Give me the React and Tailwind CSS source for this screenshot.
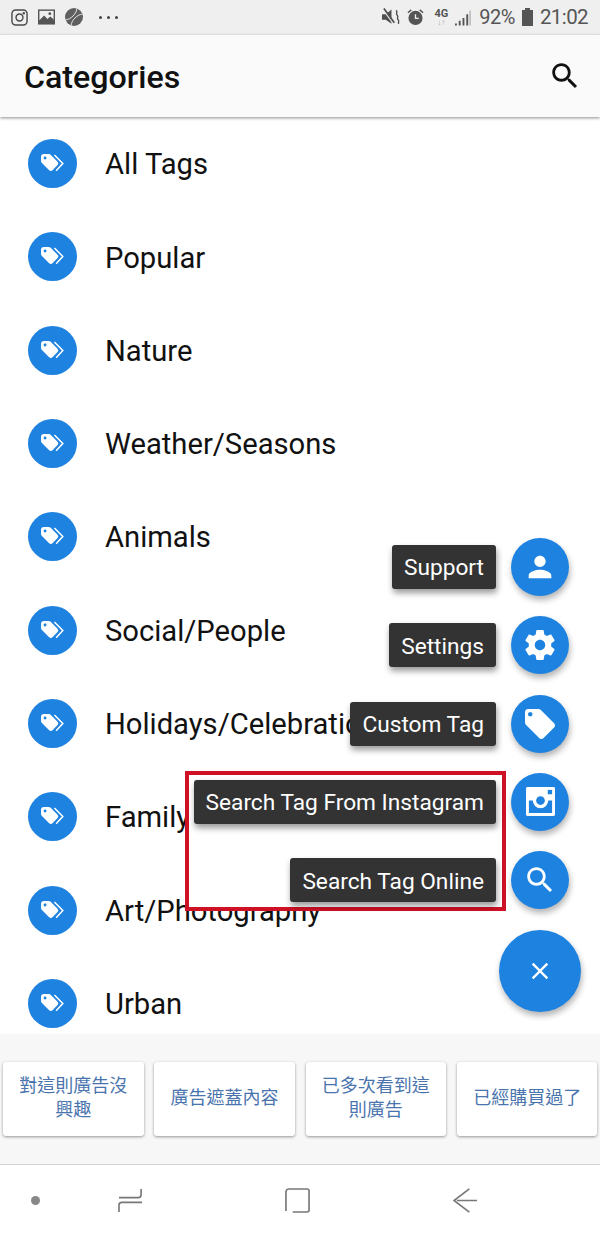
import React from 'react';

const categories = [
  'All Tags',
  'Popular',
  'Nature',
  'Weather/Seasons',
  'Animals',
  'Social/People',
  'Holidays/Celebrations',
  'Family',
  'Art/Photography',
  'Urban',
];

const adButtons = [
  '對這則廣告沒興趣',
  '廣告遮蓋內容',
  '已多次看到這則廣告',
  '已經購買過了',
];

const personPath = 'M12 12c2.21 0 4-1.79 4-4s-1.79-4-4-4-4 1.79-4 4 1.79 4 4 4zm0 2c-2.67 0-8 1.34-8 4v2h16v-2c0-2.66-5.33-4-8-4z';
const gearPath = 'M19.43 12.98c.04-.32.07-.64.07-.98s-.03-.66-.07-.98l2.11-1.65c.19-.15.24-.42.12-.64l-2-3.46c-.12-.22-.39-.3-.61-.22l-2.49 1c-.52-.4-1.08-.73-1.69-.98l-.38-2.65C14.46 2.18 14.25 2 14 2h-4c-.25 0-.46.18-.49.42l-.38 2.65c-.61.25-1.17.59-1.69.98l-2.49-1c-.23-.09-.49 0-.61.22l-2 3.46c-.13.22-.07.49.12.64l2.11 1.65c-.04.32-.07.65-.07.98s.03.66.07.98l-2.11 1.65c-.19.15-.24.42-.12.64l2 3.46c.12.22.39.3.61.22l2.49-1c.52.4 1.08.73 1.69.98l.38 2.65c.03.24.24.42.49.42h4c.25 0 .46-.18.49-.42l.38-2.65c.61-.25 1.17-.59 1.69-.98l2.49 1c.23.09.49 0 .61-.22l2-3.46c.12-.22.07-.49-.12-.64l-2.11-1.65zM12 15.5c-1.93 0-3.5-1.57-3.5-3.5s1.57-3.5 3.5-3.5 3.5 1.57 3.5 3.5-1.57 3.5-3.5 3.5z';
const tagPath = 'M21.41 11.58l-9-9C12.05 2.22 11.55 2 11 2H4c-1.1 0-2 .9-2 2v7c0 .55.22 1.05.59 1.42l9 9c.36.36.86.58 1.41.58.55 0 1.05-.22 1.41-.59l7-7c.37-.36.59-.86.59-1.41 0-.55-.23-1.06-.59-1.42zM5.5 7C4.67 7 4 6.33 4 5.5S4.67 4 5.5 4 7 4.67 7 5.5 6.33 7 5.5 7z';
const searchPath = 'M15.5 14h-.79l-.28-.27C15.41 12.59 16 11.11 16 9.5 16 5.91 13.09 3 9.5 3S3 5.91 3 9.5 5.91 16 9.5 16c1.61 0 3.09-.59 4.23-1.57l.27.28v.79l5 4.99L20.49 19l-4.99-5zm-6 0C7.01 14 5 11.99 5 9.5S7.01 5 9.5 5 14 7.01 14 9.5 11.99 14 9.5 14z';
const closePath = 'M19 6.41L17.59 5 12 10.59 6.41 5 5 6.41 10.59 12 5 17.59 6.41 19 12 13.41 17.59 19 19 17.59 13.41 12 19 6.41z';

function MaterialIcon({ d, className }) {
  return (
    <svg viewBox="0 0 24 24" className={className} fill="currentColor" aria-hidden>
      <path d={d} />
    </svg>
  );
}

function InstagramGlyph() {
  return (
    <svg viewBox="0 0 30 30" className="w-[29px] h-[29px]" aria-hidden>
      <rect x="0" y="0" width="30" height="30" rx="1.500" fill="#fff" />
      <rect x="22.500" y="3" width="4.500" height="4.500" fill="#1e82e0" />
      <path d="M3 14h4a8 8 0 0 0 16 0h4v13H3z" fill="#1e82e0" />
      <circle cx="15" cy="14" r="4.500" fill="#1e82e0" />
    </svg>
  );
}

function TagsGlyph() {
  return (
    <svg viewBox="0 0 26 22" className="w-[25px] h-[21px]" aria-hidden>
      <path d="M1 4a3 3 0 0 1 3-3h5a2.500 2.500 0 0 1 1.800.7l7.500 7.500a2.500 2.500 0 0 1 0 3.500l-5.300 5.300a2.500 2.500 0 0 1-3.500 0l-7.800-7.800a2.500 2.500 0 0 1-.7-1.700z" fill="#fff" />
      <circle cx="5.200" cy="5.200" r="1.500" fill="#1e82e0" />
      <path d="M15 2l8.800 9-7 7.500" fill="none" stroke="#fff" strokeWidth="1.600" />
    </svg>
  );
}

function StatusLeftIcons() {
  return (
    <div className="flex items-center gap-[10px]">
      <svg viewBox="0 0 18 18" className="w-[17px] h-[17px]" fill="none" stroke="#4a4a4a" strokeWidth="1.500" aria-hidden>
        <rect x="1" y="1" width="16" height="16" rx="4" />
        <circle cx="9" cy="9" r="3.700" />
        <circle cx="13.500" cy="4.500" r="0.600" fill="#4a4a4a" />
      </svg>
      <svg viewBox="0 0 18 16" className="w-[17px] h-[16px]" aria-hidden>
        <rect x="0" y="0" width="18" height="16" fill="#555" />
        <rect x="1.500" y="1.500" width="15" height="10" fill="#efefef" />
        <path d="M1.500 11.500l5-5 3.500 3.500 3-2.500 3.500 3v2h-15z" fill="#555" />
        <circle cx="12.500" cy="4.500" r="1.500" fill="#555" />
      </svg>
      <svg viewBox="0 0 18 18" className="w-[18px] h-[18px]" aria-hidden>
        <circle cx="9" cy="9" r="9" fill="#5f5f5f" />
        <path d="M5 1c3.500 4 3.500 12 0 16M13 1c-3.500 4-3.500 12 0 16" stroke="#efefef" strokeWidth="0.900" fill="none" transform="rotate(45 9 9)" />
      </svg>
      <div className="flex items-center gap-[5px] ml-[6px]">
        <span className="w-[3px] h-[3px] rounded-full bg-[#444]" />
        <span className="w-[3px] h-[3px] rounded-full bg-[#444]" />
        <span className="w-[3px] h-[3px] rounded-full bg-[#444]" />
      </div>
    </div>
  );
}

function StatusRightIcons() {
  return (
    <div className="flex items-center text-[#555]">
      <svg viewBox="0 0 19 18" className="w-[18px] h-[18px] mr-[7px]" aria-hidden>
        <path d="M0 6h4l6-5v15l-6-4H0z" fill="#4f4f4f" />
        <path d="M1 1l11 15" stroke="#efefef" strokeWidth="1.500" />
        <path d="M2 0l11 15" stroke="#4f4f4f" strokeWidth="1.800" />
        <path d="M15 2c2 2-1 3 1 5s-1 3 1 5-1 3 1 4" fill="none" stroke="#4f4f4f" strokeWidth="1.500" />
      </svg>
      <svg viewBox="0 0 18 18" className="w-[17px] h-[18px] mr-[10px]" aria-hidden>
        <circle cx="9" cy="10" r="7.500" fill="#555" />
        <path d="M9 6v4.500h3.500" fill="none" stroke="#efefef" strokeWidth="1.400" />
        <path d="M1 4.500l3.500-3M17 4.500l-3.500-3" stroke="#555" strokeWidth="1.600" />
      </svg>
      <div className="flex flex-col items-center w-[14px] mr-[7px] leading-none">
        <span className="text-[11px] leading-[11px] font-bold text-[#555] font-['Roboto',sans-serif]">4G</span>
        <span className="text-[8px] leading-[8px] text-[#aaa] font-['Roboto',sans-serif]">↓↑</span>
      </div>
      <svg viewBox="0 0 17 17" className="w-[16px] h-[17px] mr-[8px]" aria-hidden>
        <path d="M0 17v-2h2v2zM4 17v-5h2v5zM8 17v-8h2v8zM12 17v-12h2v12z" fill="#555" />
        <path d="M15.500 17v-16h1v16z" fill="#999" />
      </svg>
      <span className="text-[20px] tracking-[-0.5px] leading-none mr-[7px] font-['Roboto',sans-serif]">92%</span>
      <svg viewBox="0 0 11 18" className="w-[11px] h-[18px] mr-[7px]" aria-hidden>
        <path d="M3 0h5v2h3v16H0V2h3z" fill="#555" />
      </svg>
      <span className="text-[20.500px] tracking-[-0.600px] leading-none font-['Roboto',sans-serif]">21:02</span>
    </div>
  );
}

function FabRow({ label, children }) {
  return (
    <div className="flex items-center justify-end h-[58px]">
      <div className="h-[44px] flex items-center px-[12px] pt-[3px] rounded-[3px] bg-[#333333] text-white text-[22.700px] whitespace-nowrap shadow-[1px_4px_6px_rgba(0,0,0,0.4)]">
        {label}
      </div>
      <div className="w-[58px] h-[58px] ml-[15px] rounded-full bg-[#1e82e0] text-white flex items-center justify-center shadow-[1px_4px_6px_rgba(0,0,0,0.3)]">
        {children}
      </div>
    </div>
  );
}

function App() {
  return (
    <div className="relative w-[600px] h-[1234px] overflow-hidden bg-white font-['Roboto','Noto_Sans_CJK_TC',sans-serif]">
      {/* Status bar */}
      <div className="h-[35px] bg-[#efefef] flex items-center justify-between pl-[11px] pr-[12px] pb-[1px]">
        <StatusLeftIcons />
        <StatusRightIcons />
      </div>

      {/* App bar */}
      <div className="relative z-10 h-[82px] bg-[#fafafa] flex items-center justify-between pl-[24px] pr-[18px] shadow-[0_1px_3px_rgba(0,0,0,0.45)]">
        <h1 className="text-[32.200px] pt-[2px] font-medium text-[#111]">Categories</h1>
        <MaterialIcon d={searchPath} className="w-[34px] h-[34px] text-[#111]" />
      </div>

      {/* Category list */}
      <div className="h-[917px] overflow-hidden">
        {categories.map((name) => (
          <div key={name} className="h-[93.3px] flex items-center pl-[28px]">
            <div className="w-[49px] h-[49px] rounded-full bg-[#1e82e0] flex items-center justify-center">
              <TagsGlyph />
            </div>
            <span className="ml-[28px] pt-[3px] text-[29.200px] text-[#111] whitespace-nowrap">{name}</span>
          </div>
        ))}
      </div>

      {/* Ad feedback */}
      <div className="h-[131px] bg-[#f7f7f7] border-b border-[#d5d5d5] pt-[28px] pl-[3px] flex gap-[10.800px]">
        {adButtons.map((text) => (
          <div key={text} className="w-[140.500px] h-[74px] shrink-0 rounded-[3px] bg-white shadow-[0_1px_3px_rgba(0,0,0,0.4)] flex items-center justify-center px-[14px] pb-[7px] text-center text-[18px] leading-[24px] text-[#4a74ad] font-['Noto_Sans_CJK_TC',sans-serif]">
            {text}
          </div>
        ))}
      </div>

      {/* Nav bar */}
      <div className="h-[69px] bg-white flex items-center">
        <div className="w-[71px] flex items-center justify-center pt-[2px]">
          <span className="w-[9px] h-[9px] rounded-full bg-[#888]" />
        </div>
        <div className="w-[118px] flex items-center justify-center pt-[2px]">
          <svg viewBox="0 0 26 26" className="w-[25px] h-[25px]" fill="none" stroke="#777" strokeWidth="1.700" aria-hidden>
            <path d="M24 1v6a3 3 0 0 1-3 3H1M1 25v-7a3 3 0 0 1 3-3h21" />
          </svg>
        </div>
        <div className="w-[216px] flex items-center justify-center pt-[2px]">
          <svg viewBox="0 0 26 26" className="w-[25px] h-[25px]" fill="none" stroke="#777" strokeWidth="1.700" aria-hidden>
            <path d="M1 24V4a3 3 0 0 1 3-3h19a2 2 0 0 1 2 2v20a2 2 0 0 1-2 2H8" />
          </svg>
        </div>
        <div className="w-[120px] flex items-center justify-center pt-[2px]">
          <svg viewBox="0 0 26 26" className="w-[25px] h-[25px]" fill="none" stroke="#777" strokeWidth="1.700" aria-hidden>
            <path d="M25 13H4M17 1L1 13l16 12" />
          </svg>
        </div>
      </div>

      {/* Red highlight drawn over the list */}
      <div className="absolute left-[185px] top-[771px] w-[321px] h-[140px] border-[4px] border-[#cf1126] bg-white" />

      {/* Speed dial */}
      <div className="absolute right-[31px] top-[538px] flex flex-col gap-[20.300px]">
        <FabRow label="Support">
          <MaterialIcon d={personPath} className="w-[34px] h-[34px]" />
        </FabRow>
        <FabRow label="Settings">
          <MaterialIcon d={gearPath} className="w-[36px] h-[36px]" />
        </FabRow>
        <FabRow label="Custom Tag">
          <MaterialIcon d={tagPath} className="w-[36px] h-[36px]" />
        </FabRow>
        <FabRow label="Search Tag From Instagram">
          <InstagramGlyph />
        </FabRow>
        <FabRow label="Search Tag Online">
          <MaterialIcon d={searchPath} className="w-[34px] h-[34px]" />
        </FabRow>
      </div>

      <div className="absolute left-[499px] top-[930px] w-[82px] h-[82px] rounded-full bg-[#1e82e0] text-white flex items-center justify-center shadow-[1px_4px_6px_rgba(0,0,0,0.3)]">
        <MaterialIcon d={closePath} className="w-[28px] h-[28px]" />
      </div>
    </div>
  );
}

export default App;
